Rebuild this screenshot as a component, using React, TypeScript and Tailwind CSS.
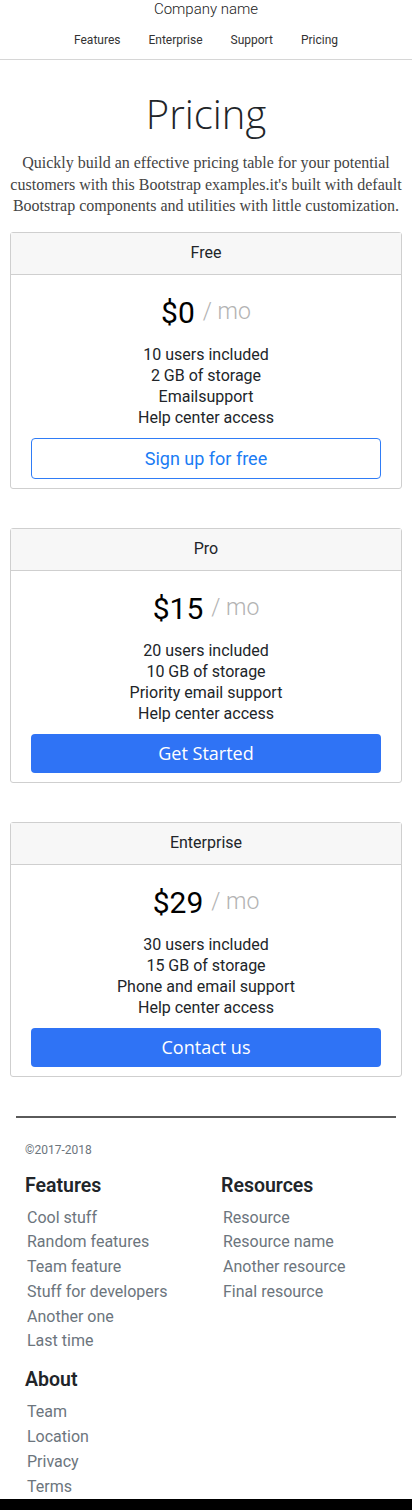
import React from "react";

interface Plan {
  name: string;
  price: string;
  features: string[];
  cta: string;
  outline: boolean;
}

const plans: Plan[] = [
  {
    name: "Free",
    price: "$0",
    features: ["10 users included", "2 GB of storage", "Emailsupport", "Help center access"],
    cta: "Sign up for free",
    outline: true,
  },
  {
    name: "Pro",
    price: "$15",
    features: ["20 users included", "10 GB of storage", "Priority email support", "Help center access"],
    cta: "Get Started",
    outline: false,
  },
  {
    name: "Enterprise",
    price: "$29",
    features: ["30 users included", "15 GB of storage", "Phone and email support", "Help center access"],
    cta: "Contact us",
    outline: false,
  },
];

const footerCols = [
  {
    title: "Features",
    links: ["Cool stuff", "Random features", "Team feature", "Stuff for developers", "Another one", "Last time"],
  },
  {
    title: "Resources",
    links: ["Resource", "Resource name", "Another resource", "Final resource"],
  },
  {
    title: "About",
    links: ["Team", "Location", "Privacy", "Terms"],
  },
];

function PlanCard({ plan }: { plan: Plan }) {
  return (
    <div className="mx-[10px] mb-[39px] border border-[#cfcfcf] rounded-[3px] bg-white">
      <div className="h-[42px] flex items-center justify-center bg-[#f7f7f7] border-b border-[#cfcfcf] text-[16px] text-[#212529]">
        {plan.name}
      </div>
      <div className="px-5 pt-[19px] pb-[9px] text-center">
        <div className="h-[38px] flex items-center justify-center text-[30px] text-black">
          {plan.price}
          <span className="ml-2 text-[23px] font-light text-[#b3b3b3]">/ mo</span>
        </div>
        <ul className="mt-[12px] text-[16px] leading-[21px] text-[#212529]">
          {plan.features.map((f) => (
            <li key={f}>{f}</li>
          ))}
        </ul>
        {plan.outline ? (
          <button className="mt-[10px] w-full h-[41px] border border-[#2f7cf6] rounded-[4px] text-[18px] text-[#1a7cf4] bg-white">
            {plan.cta}
          </button>
        ) : (
          <button className="mt-[10px] w-full h-[39px] rounded-[4px] text-[18px] text-white bg-[#2f73f5] font-['Open_Sans',sans-serif]">
            {plan.cta}
          </button>
        )}
      </div>
    </div>
  );
}

export default function App() {
  return (
    <div className="w-[412px] h-[1510px] overflow-hidden bg-white font-['Roboto',sans-serif] flex flex-col">
      <header className="h-[60px] shrink-0 border-b border-[#d6d6d6] text-center">
        <div className="text-[15px] leading-[18px] font-light text-[#222]">Company name</div>
        <nav className="mt-[13px] flex justify-center gap-[28px] text-[12px] text-[#333]">
          <a>Features</a>
          <a>Enterprise</a>
          <a>Support</a>
          <a>Pricing</a>
        </nav>
      </header>

      <h1 className="mt-[30px] text-center text-[40px] leading-[48px] font-light text-[#212529] font-['Open_Sans',sans-serif]">
        Pricing
      </h1>
      <p className="mt-[14px] px-2 text-center text-[16px] leading-[21.5px] text-[#444] font-['Liberation_Serif',serif]">
        Quickly build an effective pricing table for your potential customers with this Bootstrap
        examples.it's built with default Bootstrap components and utilities with little customization.
      </p>

      <div className="mt-[15px] shrink-0">
        {plans.map((p) => (
          <PlanCard key={p.name} plan={p} />
        ))}
      </div>

      <footer className="px-4 shrink-0">
        <div className="h-[2px] bg-[#5a5a5a]" />
        <div className="mt-[23px] ml-[9px] text-[12px] text-[#6c757d]">©2017-2018</div>
        <div className="mt-[16px] ml-[9px] grid grid-cols-[196px_1fr]">
          {footerCols.map((col, i) => (
            <div key={col.title} className={i === 2 ? "mt-[15px]" : ""}>
              <h5 className="text-[19.5px] leading-[22px] font-semibold text-[#212529]">{col.title}</h5>
              <ul className="mt-[9px] ml-[2px] text-[16px] leading-[24.8px] text-[#6c757d]">
                {col.links.map((l) => (
                  <li key={l}>{l}</li>
                ))}
              </ul>
            </div>
          ))}
        </div>
      </footer>
      <div className="flex-1" />
      <div className="h-[11px] shrink-0 bg-black" />
    </div>
  );
}
